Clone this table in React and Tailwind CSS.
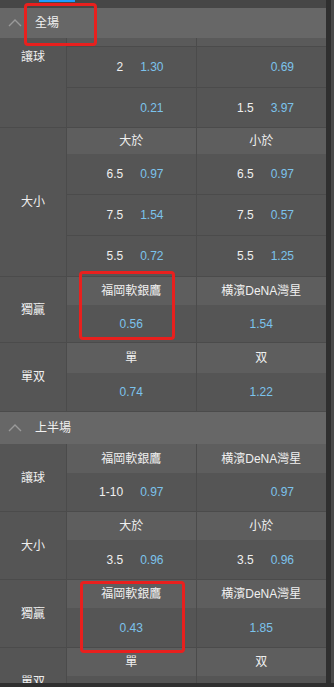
import React from "react";

const FONT = { fontFamily: '"Liberation Sans", "Noto Sans CJK TC", Arial, sans-serif' };

function Chevron() {
  return (
    <svg width="14" height="10" viewBox="0 0 14 10" className="ml-[8px] mr-[13px]">
      <polyline points="1,8 7,2 13,8" fill="none" stroke="#9a9a9a" strokeWidth="1.4" />
    </svg>
  );
}

function SectionHeader({ title, h }) {
  return (
    <div className={`flex items-center bg-[#676767] text-[12px] text-[#f2f2f2] ${h}`}>
      <Chevron />
      <span>{title}</span>
    </div>
  );
}

function HeadRow({ a, b, h }) {
  return (
    <div className={`grid grid-cols-2 bg-[#5e5e5e] text-[12px] text-[#f0f0f0] ${h}`}>
      <div className="flex items-center justify-center border-r border-[#4b4b4b]">{a}</div>
      <div className="flex items-center justify-center">{b}</div>
    </div>
  );
}

function Odd({ hc, v }) {
  return (
    <div className="flex items-center justify-end gap-[17px] pr-[32px]">
      {hc ? <span className="text-[#f0f0f0]">{hc}</span> : null}
      {v ? <span className="text-[#7cc3ec]">{v}</span> : null}
    </div>
  );
}

function ValRow({ left, right, h, last }) {
  return (
    <div className={`grid grid-cols-2 text-[12px] ${h} ${last ? "" : "border-b border-[#4b4b4b]"}`}>
      <div className="border-r border-[#4b4b4b] flex justify-end">{left}</div>
      <div className="flex justify-end">{right}</div>
    </div>
  );
}

function CenterRow({ a, b, h }) {
  return (
    <div className={`grid grid-cols-2 text-[12px] text-[#7cc3ec] ${h}`}>
      <div className="flex items-center justify-center border-r border-[#4b4b4b]">{a}</div>
      <div className="flex items-center justify-center">{b}</div>
    </div>
  );
}

function Group({ label, children, top }) {
  return (
    <div className="flex shrink-0 border-b border-[#4b4b4b]">
      <div
        className={`flex w-[67px] shrink-0 justify-center border-r border-[#4b4b4b] text-[12px] text-[#f0f0f0] ${
          top ? "items-start pt-[10px]" : "items-center"
        }`}
      >
        {label}
      </div>
      <div className="flex flex-1 flex-col">{children}</div>
    </div>
  );
}

export default function App() {
  return (
    <div className="relative flex h-[687px] w-[334px] flex-col overflow-hidden bg-[#555555]" style={FONT}>
      <div className="flex min-h-0 flex-1">
        <div className="flex w-[326px] flex-col overflow-hidden">
          <div className="h-[8px] shrink-0 bg-[#464646]">
            <div className="ml-[39px] h-[2px] w-[36px] bg-[#1e9bff]" />
          </div>

          <SectionHeader title="全場" h="h-[30px] shrink-0" />

          <Group label="讓球" top>
            <div className="h-[9px] border-b border-[#4b4b4b] bg-[#5a5a5a] grid grid-cols-2">
              <div className="border-r border-[#4b4b4b]" />
              <div />
            </div>
            <ValRow h="h-[41px]" left={<Odd hc="2" v="1.30" />} right={<Odd v="0.69" />} />
            <ValRow h="h-[39px]" last left={<Odd v="0.21" />} right={<Odd hc="1.5" v="3.97" />} />
          </Group>

          <Group label="大小">
            <HeadRow a="大於" b="小於" h="h-[26px]" />
            <ValRow h="h-[41px]" left={<Odd hc="6.5" v="0.97" />} right={<Odd hc="6.5" v="0.97" />} />
            <ValRow h="h-[41px]" left={<Odd hc="7.5" v="1.54" />} right={<Odd hc="7.5" v="0.57" />} />
            <ValRow h="h-[40px]" last left={<Odd hc="5.5" v="0.72" />} right={<Odd hc="5.5" v="1.25" />} />
          </Group>

          <Group label="獨贏">
            <HeadRow a="福岡軟銀鷹" b="横濱DeNA灣星" h="h-[28px]" />
            <CenterRow a="0.56" b="1.54" h="h-[37px]" />
          </Group>

          <Group label="單双">
            <HeadRow a="單" b="双" h="h-[30px]" />
            <CenterRow a="0.74" b="1.22" h="h-[38px]" />
          </Group>

          <SectionHeader title="上半場" h="h-[32px] shrink-0" />

          <Group label="讓球">
            <HeadRow a="福岡軟銀鷹" b="横濱DeNA灣星" h="h-[29px]" />
            <ValRow h="h-[38px]" last left={<Odd hc="1-10" v="0.97" />} right={<Odd v="0.97" />} />
          </Group>

          <Group label="大小">
            <HeadRow a="大於" b="小於" h="h-[28px]" />
            <ValRow h="h-[39px]" last left={<Odd hc="3.5" v="0.96" />} right={<Odd hc="3.5" v="0.96" />} />
          </Group>

          <Group label="獨贏">
            <HeadRow a="福岡軟銀鷹" b="横濱DeNA灣星" h="h-[28px]" />
            <CenterRow a="0.43" b="1.85" h="h-[39px]" />
          </Group>

          <Group label="單双">
            <HeadRow a="單" b="双" h="h-[28px]" />
            <CenterRow a="" b="" h="h-[39px]" />
          </Group>
        </div>
        <div className="w-[5px] shrink-0 bg-[#2f2f2f]" />
        <div className="w-[3px] shrink-0 bg-[#4a4a4a]" />
      </div>
      <div className="h-[4px] shrink-0 bg-[#2f2f2f]" />

      <div className="pointer-events-none absolute left-[24px] top-[3px] h-[43px] w-[73px] rounded-[4px] border-[3px] border-[#e8201e]" />
      <div className="pointer-events-none absolute left-[79px] top-[271px] h-[69px] w-[96px] rounded-[4px] border-[3px] border-[#e8201e]" />
      <div className="pointer-events-none absolute left-[80px] top-[581px] h-[72px] w-[105px] rounded-[4px] border-[3px] border-[#e8201e]" />
    </div>
  );
}
